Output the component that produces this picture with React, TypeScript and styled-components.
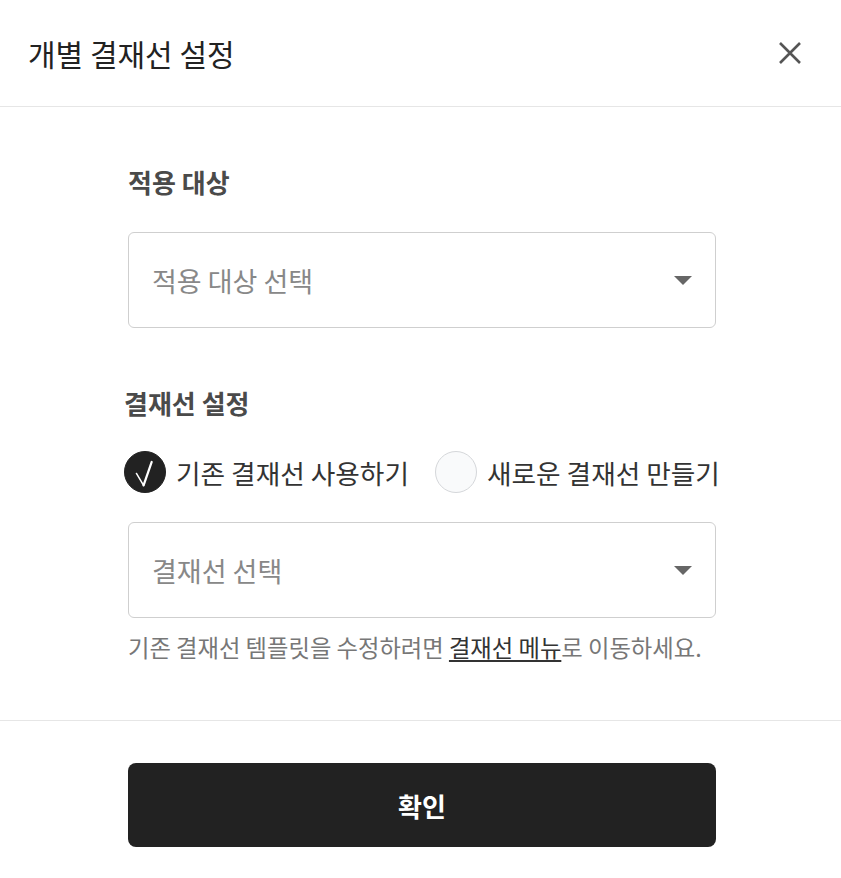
import React from "react";
import styled, { createGlobalStyle } from "styled-components";

const Global = createGlobalStyle`
  html, body { margin: 0; padding: 0; background: #fff; }
  body { font-family: "Noto Sans CJK KR", "Noto Sans", sans-serif; }
  * { box-sizing: border-box; }
`;

const Modal = styled.div`
  width: 841px;
  height: 878px;
  background: #fff;
  display: flex;
  flex-direction: column;
`;

const Header = styled.header`
  height: 107px;
  border-bottom: 1px solid #e6e6e6;
  display: flex;
  align-items: center;
  justify-content: space-between;
  padding: 0 38px 0 28px;
`;

const Title = styled.h1`
  margin: 0;
  font-size: 30px;
  font-weight: 400;
  color: #222;
`;

const CloseButton = styled.button`
  border: 0;
  background: none;
  padding: 0;
  width: 26px;
  height: 26px;
  display: flex;
  align-items: center;
  justify-content: center;
  cursor: pointer;
`;

const Body = styled.div`
  padding: 50px 125px 0 128px;
  display: flex;
  flex-direction: column;
  height: 614px;
  border-bottom: 1px solid #e6e6e6;
`;

const SectionLabel = styled.h2<{ $shift?: number }>`
  margin: 0 0 0 ${(p) => p.$shift ?? 0}px;
  font-size: 26px;
  font-weight: 700;
  color: #4a4a4a;
  line-height: 50px;
`;

const Select = styled.div<{ $mt: number }>`
  margin-top: ${(p) => p.$mt}px;
  height: 96px;
  border: 1px solid #cfcfcf;
  border-radius: 6px;
  display: flex;
  align-items: center;
  justify-content: space-between;
  padding: 0 23px 0 23px;
`;

const Placeholder = styled.span`
  font-size: 27px;
  color: #888;
`;

const Caret = styled.span`
  width: 0;
  height: 0;
  border-left: 9px solid transparent;
  border-right: 9px solid transparent;
  border-top: 9px solid #666;
  margin-top: 1px;
`;

const Gap = styled.div<{ $h: number }>`
  height: ${(p) => p.$h}px;
`;

const RadioRow = styled.div`
  display: flex;
  align-items: center;
  margin-left: -4px;
  margin-top: 23px;
  gap: 26px;
  white-space: nowrap;
`;

const RadioItem = styled.label`
  display: flex;
  flex: none;
  align-items: center;
  gap: 10px;
  cursor: pointer;
`;

const RadioCircle = styled.span<{ $checked?: boolean }>`
  width: 42px;
  height: 42px;
  flex: none;
  border-radius: 50%;
  background: ${(p) => (p.$checked ? "#222" : "#f9fafb")};
  border: 1px solid ${(p) => (p.$checked ? "#222" : "#d5d7da")};
  display: flex;
  align-items: center;
  justify-content: center;
`;

const RadioText = styled.span`
  font-size: 26.7px;
  color: #333;
`;

const Helper = styled.p`
  margin: 12px 0 0;
  font-size: 23.3px;
  color: #777;
`;

const HelperLink = styled.a`
  color: #333;
  text-decoration: underline;
  text-underline-offset: 3px;
`;

const Footer = styled.footer`
  padding: 42px 125px 0 128px;
`;

const Confirm = styled.button`
  width: 100%;
  height: 84px;
  border: 0;
  border-radius: 8px;
  background: #222;
  color: #fff;
  font-family: inherit;
  font-size: 26px;
  font-weight: 700;
  cursor: pointer;
`;

export default function App() {
  return (
    <>
      <Global />
      <Modal>
        <Header>
          <Title>개별 결재선 설정</Title>
          <CloseButton aria-label="닫기">
            <svg width="24" height="24" viewBox="0 0 24 24">
              <path d="M2 2 L22 22 M22 2 L2 22" stroke="#555" strokeWidth="2.6" strokeLinecap="butt" />
            </svg>
          </CloseButton>
        </Header>
        <Body>
          <SectionLabel>적용 대상</SectionLabel>
          <Select $mt={25}>
            <Placeholder>적용 대상 선택</Placeholder>
            <Caret />
          </Select>
          <Gap $h={50} />
          <SectionLabel $shift={-4}>결재선 설정</SectionLabel>
          <RadioRow>
            <RadioItem>
              <RadioCircle $checked>
                <svg width="42" height="42" viewBox="0 0 42 42">
                  <path d="M12 22.5 L19.5 35" fill="none" stroke="#fff" strokeWidth="1.6" strokeLinecap="round" />
                  <path d="M19.5 35 L28 10.5" fill="none" stroke="#fff" strokeWidth="2.4" strokeLinecap="round" />
                </svg>
              </RadioCircle>
              <RadioText>기존 결재선 사용하기</RadioText>
            </RadioItem>
            <RadioItem>
              <RadioCircle />
              <RadioText>새로운 결재선 만들기</RadioText>
            </RadioItem>
          </RadioRow>
          <Select $mt={29}>
            <Placeholder>결재선 선택</Placeholder>
            <Caret />
          </Select>
          <Helper>
            기존 결재선 템플릿을 수정하려면 <HelperLink>결재선 메뉴</HelperLink>로 이동하세요.
          </Helper>
        </Body>
        <Footer>
          <Confirm>확인</Confirm>
        </Footer>
      </Modal>
    </>
  );
}
